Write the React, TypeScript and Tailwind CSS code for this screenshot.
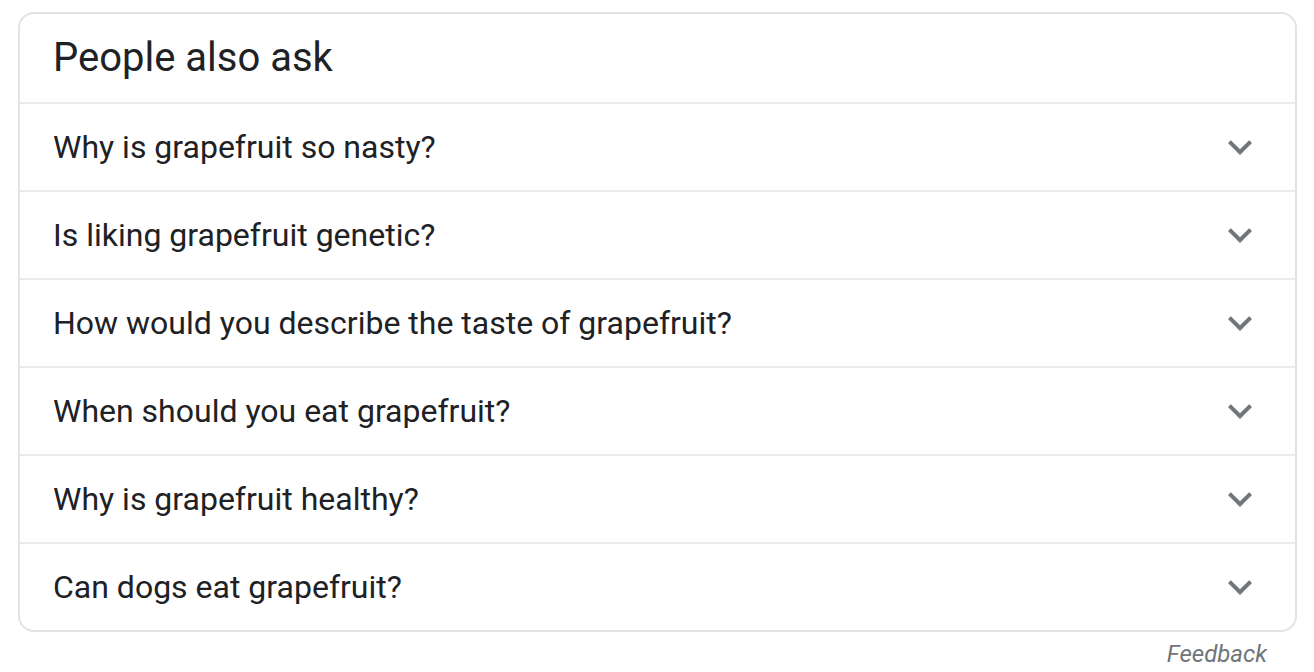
import React from "react";

const questions = [
  "Why is grapefruit so nasty?",
  "Is liking grapefruit genetic?",
  "How would you describe the taste of grapefruit?",
  "When should you eat grapefruit?",
  "Why is grapefruit healthy?",
  "Can dogs eat grapefruit?",
];

const Chevron = () => (
  <svg width="48" height="48" viewBox="0 0 24 24" className="shrink-0">
    <path
      d="M16.59 8.59L12 13.17 7.41 8.59 6 10l6 6 6-6z"
      fill="#70757a"
    />
  </svg>
);

const App = () => {
  return (
    <div className="w-[1314px] h-[672px] bg-white font-['Roboto',sans-serif] pt-[12px] pl-[18px]">
      <div className="w-[1279px] border-2 border-[#e1e3e6] rounded-[16px] overflow-hidden">
        <div className="h-[88px] flex items-center pl-[33px]">
          <h2 className="text-[40px] leading-[48px] text-[#202124]">
            People also ask
          </h2>
        </div>
        {questions.map((q) => (
          <div
            key={q}
            className="h-[88px] border-t-2 border-[#ebebeb] flex items-center justify-between pl-[33px] pr-[31px]"
          >
            <span className="text-[32px] leading-[40px] text-[#202124]">
              {q}
            </span>
            <Chevron />
          </div>
        ))}
      </div>
      <div className="w-[1279px] flex justify-end pr-[30px] mt-[6px]">
        <span className="text-[24px] leading-[32px] italic text-[#70757a]">
          Feedback
        </span>
      </div>
    </div>
  );
};

export default App;
